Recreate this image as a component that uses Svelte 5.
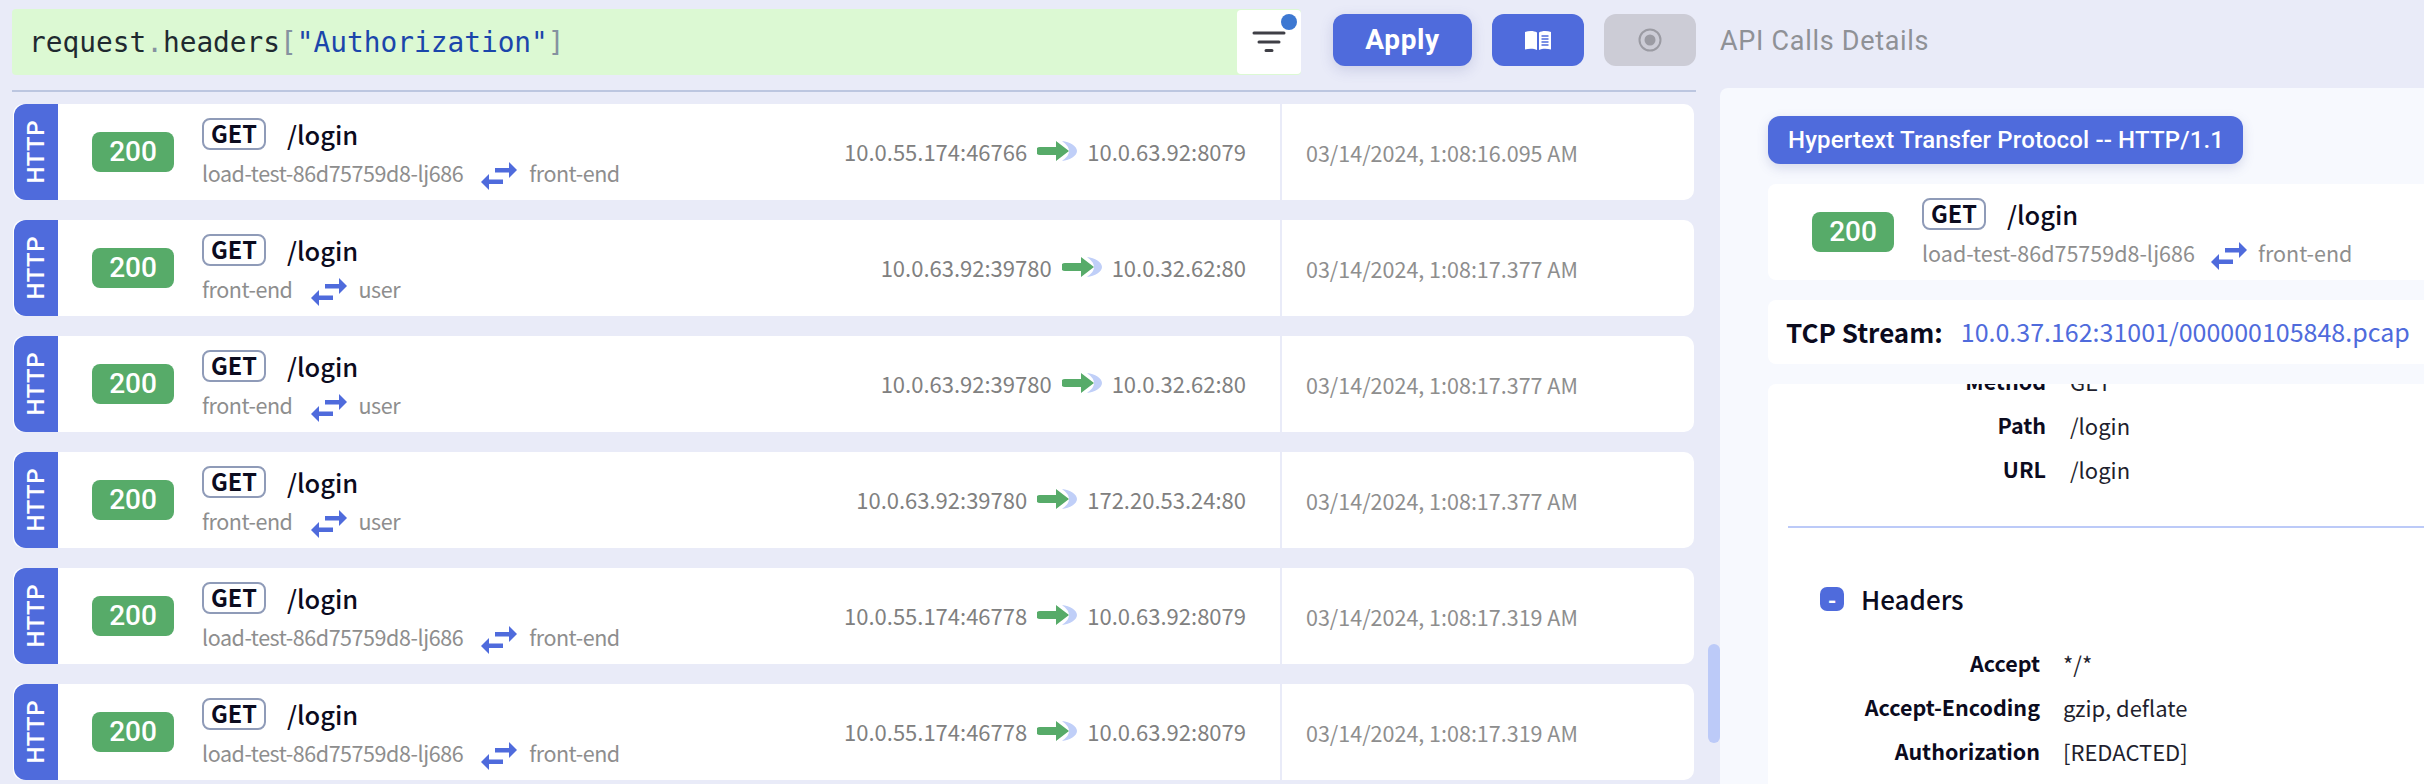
<script>
  const rows = [
    { from: 'load-test-86d75759d8-lj686', to: 'front-end', src: '10.0.55.174:46766', dst: '10.0.63.92:8079', time: '03/14/2024, 1:08:16.095 AM' },
    { from: 'front-end', to: 'user', src: '10.0.63.92:39780', dst: '10.0.32.62:80', time: '03/14/2024, 1:08:17.377 AM' },
    { from: 'front-end', to: 'user', src: '10.0.63.92:39780', dst: '10.0.32.62:80', time: '03/14/2024, 1:08:17.377 AM' },
    { from: 'front-end', to: 'user', src: '10.0.63.92:39780', dst: '172.20.53.24:80', time: '03/14/2024, 1:08:17.377 AM' },
    { from: 'load-test-86d75759d8-lj686', to: 'front-end', src: '10.0.55.174:46778', dst: '10.0.63.92:8079', time: '03/14/2024, 1:08:17.319 AM' },
    { from: 'load-test-86d75759d8-lj686', to: 'front-end', src: '10.0.55.174:46778', dst: '10.0.63.92:8079', time: '03/14/2024, 1:08:17.319 AM' }
  ];
  const general = [['Path', '/login'], ['URL', '/login']];
  const headers = [['Accept', '*/*'], ['Accept-Encoding', 'gzip, deflate'], ['Authorization', '[REDACTED]']];
</script>

{#snippet swap()}
  <svg class="swap" viewBox="0 0 36 28" aria-hidden="true">
    <path d="M14 6h14V0l8 8-8 8v-5.500H14z M0 20l8-8v5.500h14V22H8v6z" fill="#4f6bdc" />
  </svg>
{/snippet}

{#snippet summary(from, to, cls)}
  <span class="status">200</span>
  <div class="info {cls}">
    <div class="line1"><span class="method">GET</span><span class="path">/login</span></div>
    <div class="line2"><span>{from}</span>{@render swap()}<span>{to}</span></div>
  </div>
{/snippet}

<div class="app">
  <section class="left">
    <div class="top">
      <div class="editor">
        <div class="code">request<i>.</i>headers<i>[</i><b>"Authorization"</b><i>]</i></div>
        <div class="filter">
          <svg viewBox="0 0 64 64" width="64" height="64" aria-hidden="true">
            <path d="M17 23h30M22 32h20M29 40.500h6" stroke="#3f3f46" stroke-width="3" stroke-linecap="round" />
          </svg>
          <span class="dot"></span>
        </div>
      </div>
      <button class="btn apply">Apply</button>
      <button class="btn icon">
        <svg viewBox="0 0 28 22" width="28" height="22" aria-hidden="true">
          <path d="M1 3c4-1.500 9-1.500 12 .5V21C10 19.500 5 19.500 1 20.500z" fill="#fff" />
          <path d="M15 3.500c3-2 8-2 12-.5v17.500c-4-1-9-1-12 .5z" fill="#fff" />
          <path d="M17.500 7h7M17.500 10h7M17.500 13h7M17.500 16h7" stroke="#4f6bdc" stroke-width="1.300" />
        </svg>
      </button>
      <button class="btn rec">
        <svg viewBox="0 0 24 24" width="24" height="24" aria-hidden="true">
          <circle cx="12" cy="12" r="10.500" fill="none" stroke="#9b9ba3" stroke-width="2" />
          <circle cx="12" cy="12" r="5.500" fill="#9b9ba3" />
        </svg>
      </button>
    </div>
    <div class="list-wrap">
      <div class="list">
        {#each rows as r}
          <article class="row">
            <div class="proto"><span>HTTP</span></div>
            <div class="main">
              {@render summary(r.from, r.to, 'tight')}
              <div class="addr">
                <span>{r.src}</span>
                <svg class="flow" viewBox="0 0 40 20" aria-hidden="true">
                  <path d="M25 0c8 1 15 5 15 10s-7 9-15 10c4-3 7-6 7-10s-3-7-7-10z" fill="#c0cff8" />
                  <path d="M3 6h16V0l13 10-13 10v-6H3a4 4 0 0 1 0-8z" fill="#57ab69" />
                </svg>
                <span>{r.dst}</span>
              </div>
            </div>
            <div class="time">{r.time}</div>
          </article>
        {/each}
      </div>
      <div class="scroll"></div>
    </div>
  </section>

  <section class="right">
    <div class="title">API Calls Details</div>
    <div class="panel">
      <div class="chip">Hypertext Transfer Protocol -- HTTP/1.1</div>
      <div class="card head">{@render summary('load-test-86d75759d8-lj686', 'front-end', '')}</div>
      <div class="card tcp"><strong>TCP Stream:</strong><span>10.0.37.162:31001/000000105848.pcap</span></div>
      <div class="card body">
        <div class="pairs first">
          <div class="pair clipped"><span class="k">Method</span><span class="v">GET</span></div>
          {#each general as [k, v]}
            <div class="pair"><span class="k">{k}</span><span class="v">{v}</span></div>
          {/each}
        </div>
        <hr />
        <div class="section"><span class="minus">-</span><h3>Headers</h3></div>
        <div class="pairs second">
          {#each headers as [k, v]}
            <div class="pair"><span class="k">{k}</span><span class="v">{v}</span></div>
          {/each}
        </div>
      </div>
    </div>
  </section>
</div>

<style>
  :global(body) { margin: 0; background: #e9ebf8; overflow: hidden; }
  .app {
    display: grid;
    grid-template-columns: 1720px 1fr;
    width: 2424px;
    height: 784px;
    overflow: hidden;
    font-family: "Noto Sans CJK SC", "Noto Sans", sans-serif;
    background: #e9ebf8;
  }
  .left { display: flex; flex-direction: column; padding-left: 12px; min-width: 0; }
  .top {
    display: flex;
    align-items: flex-start;
    height: 90px;
    width: 1684px;
    border-bottom: 2px solid #bcc6e0;
  }
  .editor {
    display: flex;
    width: 1289px;
    height: 66px;
    margin-top: 9px;
    background: #dcf9d3;
    border-radius: 4px;
  }
  .code {
    flex: 1;
    padding-left: 17px;
    font: 27.800px/68px "DejaVu Sans Mono", monospace;
    color: #1f2a30;
  }
  .code i { font-style: normal; color: #8592a0; }
  .code b { font-weight: 400; color: #1b46ab; }
  .filter {
    position: relative;
    width: 64px;
    height: 64px;
    margin-top: 1px;
    background: #fff;
    border-radius: 4px;
  }
  .filter svg { display: block; }
  .dot {
    position: absolute;
    top: 4px;
    right: 4px;
    width: 16px;
    height: 16px;
    border-radius: 50%;
    background: #3d78d2;
  }
  .btn {
    display: flex;
    align-items: center;
    justify-content: center;
    height: 52px;
    margin-top: 14px;
    padding: 0;
    border: 0;
    border-radius: 12px;
    background: #4f6bdc;
  }
  .apply {
    width: 139px;
    margin-left: 32px;
    color: #fff;
    font: 700 28px/1 Roboto, sans-serif;
    letter-spacing: 0.6px;
    box-shadow: 0 4px 14px rgba(80, 90, 160, 0.2);
  }
  .icon { width: 92px; margin-left: 20px; }
  .rec { width: 92px; margin-left: 20px; background: #ccccd6; }

  .list-wrap { display: flex; flex: 1; min-height: 0; position: relative; }
  .list {
    display: flex;
    flex-direction: column;
    gap: 20px;
    width: 1681px;
    padding: 12px 0 0 1px;
  }
  .row {
    display: flex;
    flex: none;
    height: 96px;
    background: #fff;
    border-radius: 10px;
    overflow: hidden;
    padding-left: 1px;
  }
  .proto {
    display: flex;
    align-items: center;
    justify-content: center;
    flex: none;
    width: 44px;
    background: #4f6bdc;
    border-radius: 12px 0 0 12px;
  }
  .proto span {
    writing-mode: vertical-rl;
    transform: rotate(180deg);
    color: #fff;
    font: 500 24px/1 Roboto, sans-serif;
    letter-spacing: 0.5px;
  }
  .main { display: flex; flex: 1; align-items: flex-start; min-width: 0; padding-left: 34px; }
  .status {
    flex: none;
    width: 82px;
    height: 40px;
    margin-top: 28px;
    border-radius: 8px;
    background: #57ab69;
    color: #fff;
    font: 500 28px/40px Roboto, sans-serif;
    text-align: center;
  }
  .info { margin-left: 28px; padding-top: 14px; }
  .line1 { display: flex; align-items: center; height: 32px; }
  .method {
    display: flex;
    align-items: center;
    justify-content: center;
    box-sizing: border-box;
    width: 64px;
    height: 32px;
    border: 2px solid #8f9bb8;
    border-radius: 8px;
    color: #0b0b1e;
    font-size: 23.500px;
    font-weight: 700;
    line-height: 1;
  }
  .path { margin-left: 21px; color: #0b0b1e; font-size: 25.500px; font-weight: 500; line-height: 32px; }
  .line2 {
    display: flex;
    align-items: center;
    height: 30px;
    margin-top: 8px;
    color: #8e8e8e;
    font-size: 21.500px;
    line-height: 30px;
    white-space: nowrap;
  }
  .tight .line2 { letter-spacing: -0.45px; }
  .swap { flex: none; width: 36px; height: 28px; margin: 0 11px 0 16px; position: relative; top: 3px; }
  .tight .swap { margin: 0 12px 0 18px; }
  .addr {
    display: flex;
    align-items: center;
    gap: 10px;
    margin-left: auto;
    margin-right: 34px;
    height: 93px;
    color: #808080;
    font-size: 22px;
    white-space: nowrap;
  }
  .flow { flex: none; width: 40px; height: 20px; }
  .time {
    flex: none;
    box-sizing: border-box;
    width: 414px;
    height: 96px;
    padding-left: 24px;
    border-left: 2px solid #e9ebf8;
    color: #8e8e8e;
    font-size: 21.500px;
    line-height: 98px;
    white-space: nowrap;
  }
  .scroll {
    position: absolute;
    top: 552px;
    left: 1696px;
    width: 12px;
    height: 99px;
    border-radius: 6px;
    background: #bccaf8;
  }

  .right { display: flex; flex-direction: column; min-width: 0; }
  .title {
    height: 88px;
    box-sizing: border-box;
    padding-top: 24px;
    color: #8f9196;
    font: 400 27px/34px Roboto, sans-serif;
    letter-spacing: 0.7px;
    white-space: nowrap;
  }
  .panel {
    flex: 1;
    display: flex;
    flex-direction: column;
    align-items: stretch;
    min-height: 0;
    padding: 28px 0 0 48px;
    background: #f7f9fe;
    border-radius: 8px 0 0 0;
    overflow: hidden;
  }
  .chip {
    align-self: flex-start;
    box-sizing: border-box;
    width: 475px;
    height: 48px;
    padding-left: 20px;
    border-radius: 12px;
    background: #4f6bdc;
    color: #fff;
    font: 500 24px/48px Roboto, sans-serif;
    letter-spacing: 0.15px;
    white-space: nowrap;
    box-shadow: 0 4px 12px rgba(80, 90, 160, 0.2);
  }
  .card { background: #fff; border-radius: 8px 0 0 8px; }
  .head { display: flex; align-items: flex-start; height: 96px; margin-top: 20px; padding-left: 44px; }
  .tcp {
    display: flex;
    align-items: center;
    height: 62px;
    margin-top: 20px;
    padding: 0 0 2px 18px;
    font-size: 26px;
    white-space: nowrap;
  }
  .tcp strong { color: #0b0b1e; font-weight: 700; }
  .tcp span { margin-left: 18px; color: #4f6bdc; font-size: 25px; }
  .body { flex: 1; margin-top: 20px; min-height: 0; overflow: hidden; border-radius: 8px 0 0 0; position: relative; }
  .pairs { display: flex; flex-direction: column; gap: 10px; }
  .first { margin-top: -20px; }
  .pair { display: flex; align-items: center; height: 34px; font-size: 22px; line-height: 34px; white-space: nowrap; }
  .k { text-align: right; font-weight: 700; color: #0b0b1e; font-size: 21.500px; }
  .v { color: #1f1f2e; }
  .first .k { width: 278px; }
  .first .v { margin-left: 24px; }
  .second .k { width: 272px; }
  .second .v { margin-left: 23px; }
  .clipped { flex: none; }
  hr { margin: 40px 0 0 20px; height: 2px; border: 0; background: #bccaf8; }
  .section { display: flex; align-items: center; height: 32px; margin: 55px 0 0 52px; }
  .minus {
    width: 24px;
    height: 24px;
    border-radius: 7px;
    background: #4f6bdc;
    color: #fff;
    font-size: 22px;
    font-weight: 700;
    line-height: 23px;
    text-align: center;
  }
  h3 { margin: 0 0 0 17px; color: #0b0b1e; font-size: 26px; font-weight: 500; line-height: 32px; }
  .second { margin-top: 31px; }
</style>
